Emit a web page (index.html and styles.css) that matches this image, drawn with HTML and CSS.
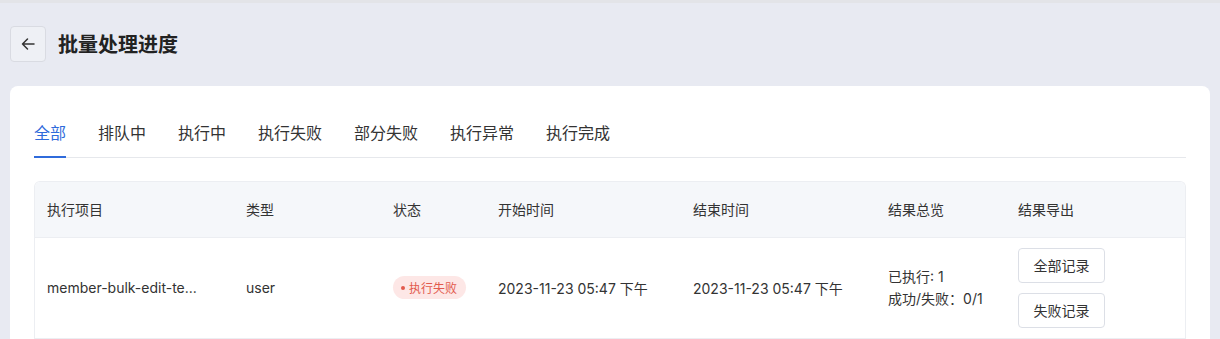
FILE: index.html
```html
<!DOCTYPE html>
<html lang="zh-CN">
<head>
<meta charset="utf-8">
<title>批量处理进度</title>
<link rel="stylesheet" href="styles.css">
</head>
<body>
<div class="topline"></div>
<div class="page">
  <div class="header">
    <button class="back" aria-label="返回">
      <svg width="16" height="16" viewBox="0 0 16 16" fill="none" stroke="#333" stroke-width="1.5" stroke-linecap="round" stroke-linejoin="round"><path d="M14 8H2.5M7.5 3L2.5 8l5 5"/></svg>
    </button>
    <h1 class="title">批量处理进度</h1>
  </div>
  <div class="card">
    <div class="tabs">
      <div class="tab active">全部</div>
      <div class="tab">排队中</div>
      <div class="tab">执行中</div>
      <div class="tab">执行失败</div>
      <div class="tab">部分失败</div>
      <div class="tab">执行异常</div>
      <div class="tab">执行完成</div>
    </div>
    <div class="table-wrap">
      <table class="table">
        <colgroup>
          <col class="c1"><col class="c2"><col class="c3"><col class="c4"><col class="c5"><col class="c6"><col class="c7">
        </colgroup>
        <thead>
          <tr>
            <th>执行项目</th><th>类型</th><th>状态</th><th>开始时间</th><th>结束时间</th><th>结果总览</th><th>结果导出</th>
          </tr>
        </thead>
        <tbody>
          <tr>
            <td>member-bulk-edit-te...</td>
            <td>user</td>
            <td><span class="badge"><span class="dot"></span>执行失败</span></td>
            <td>2023-11-23 05:47 下午</td>
            <td>2023-11-23 05:47 下午</td>
            <td><div class="summary"><div>已执行: 1</div><div>成功/失败：0/1</div></div></td>
            <td><div class="btns"><button class="btn">全部记录</button><button class="btn">失败记录</button></div></td>
          </tr>
        </tbody>
      </table>
    </div>
  </div>
</div>
</body>
</html>
```

FILE: styles.css
```css
* { box-sizing: border-box; }
html, body { margin: 0; padding: 0; }
body {
  background: #e8eaf2;
  font-family: "Inter", "Noto Sans CJK SC", sans-serif;
  color: #333;
  height: 339px;
  overflow: hidden;
}
.topline { height: 3px; background: #e3e4e8; }
.page { padding: 0 10px 0 10px; }
.header {
  display: flex;
  align-items: center;
  height: 36px;
  margin-top: 23px;
}
.back {
  width: 36px; height: 36px;
  border: 1px solid #d9dbe2;
  border-radius: 4px;
  background: #eef0f5;
  display: flex; align-items: center; justify-content: center;
  padding: 0; margin: 0;
}
.title {
  margin: -2px 0 0 12px;
  font-size: 20px;
  font-weight: 700;
  color: #222;
  font-family: "Noto Sans CJK SC", sans-serif;
}
.card {
  margin-top: 24px;
  background: #fff;
  border-radius: 8px;
  padding: 30px 24px 0 24px;
  height: 260px;
}
.tabs {
  display: flex;
  gap: 32px;
  border-bottom: 1px solid #e6e8ec;
  height: 42px;
}
.tab {
  font-size: 16px;
  line-height: 33px;
  height: 42px;
  color: #333;
  font-family: "Noto Sans CJK SC", sans-serif;
  border-bottom: 2px solid transparent;
  margin-bottom: -1px;
}
.tab.active { color: #2f6bdb; border-bottom-color: #2f6bdb; }
.table-wrap {
  margin-top: 23px;
  border: 1px solid #eceef2;
  border-bottom: none;
  border-radius: 6px 6px 0 0;
  overflow: hidden;
}
.table {
  width: 100%;
  border-collapse: collapse;
  table-layout: fixed;
  font-size: 14px;
}
.c1 { width: 199px; }
.c2 { width: 147px; }
.c3 { width: 105px; }
.c4 { width: 195px; }
.c5 { width: 195px; }
.c6 { width: 130px; }
.c7 { width: auto; }
th {
  background: #f5f7fa;
  height: 55px;
  text-align: left;
  font-weight: 400;
  padding: 0 0 0 12px;
  color: #333;
  border-bottom: 1px solid #eceef2;
}
td {
  height: 101px;
  padding: 0 0 0 12px;
  color: #333;
  border-bottom: 1px solid #eceef2;
  white-space: nowrap;
}
.badge {
  display: inline-flex;
  align-items: center;
  height: 23px;
  padding: 0 9px 0 8px;
  border-radius: 12px;
  background: #fde7e6;
  color: #e25a4d;
  font-size: 12px;
}
.dot {
  width: 4px; height: 4px;
  border-radius: 50%;
  background: #e25a4d;
  margin-right: 4px;
}
.summary { line-height: 22px; }
.btns { display: flex; flex-direction: column; gap: 10px; }
.btn {
  width: 87px; height: 35px;
  border: 1px solid #dcdfe6;
  border-radius: 4px;
  background: #fff;
  font-family: "Noto Sans CJK SC", sans-serif;
  font-size: 14px;
  color: #333;
  padding: 0;
}
```
